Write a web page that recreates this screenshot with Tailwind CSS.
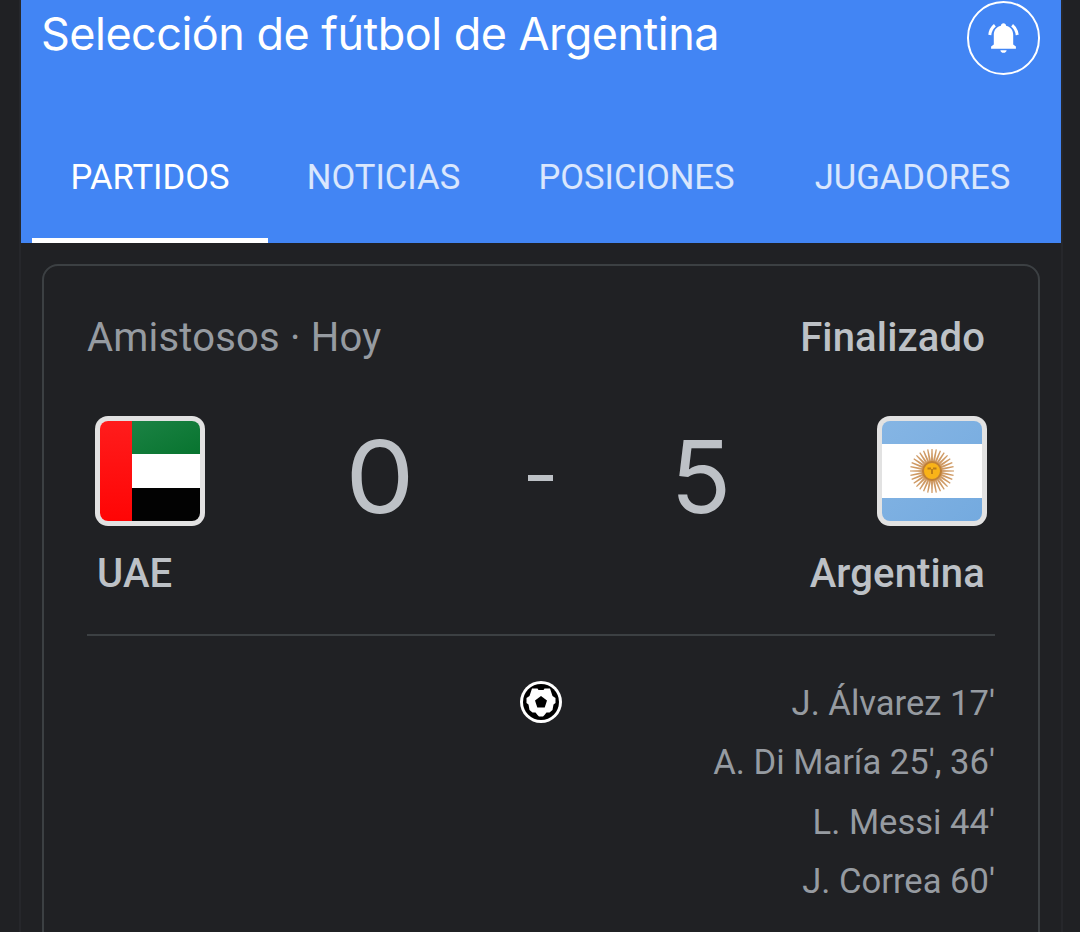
<!DOCTYPE html>
<html lang="es">
<head>
    <meta charset="UTF-8">
    <meta name="viewport" content="width=device-width, initial-scale=1.0">
    <title>Selección de fútbol de Argentina</title>
    <script src="https://cdn.jsdelivr.net/npm/@tailwindcss/browser@4"></script>
</head>
<body class="bg-[#202124] font-[Roboto,sans-serif] overflow-hidden">
    <div class="mx-[19px] w-[1044px] h-[932px] border-x-2 border-[#26272b] overflow-hidden">
        <!-- Header -->
        <header class="h-[243px] w-[1040px] bg-[#4285f4] flex flex-col">
            <div class="h-[110px] pl-[20px] pr-[21px] flex justify-between items-start">
                <h1 class="font-[Inter,sans-serif] text-[45px] leading-[68px] tracking-[-0.53px] text-white whitespace-nowrap">Selección de fútbol de Argentina</h1>
                <button class="mt-px w-[73px] h-[74px] rounded-full border-2 border-white flex items-center justify-center" aria-label="Notificaciones">
                    <svg class="w-[36px] h-[36px]" viewBox="0 0 36 36" fill="none">
                        <path d="M17.500 3.200c1.500 0 2.500 1 2.600 2.500 4.600 1 7.100 4.700 7.100 9.300v9.500l2.700 2v2.300H5.100v-2.300l2.700-2V15c0-4.600 2.500-8.300 7.100-9.300.1-1.500 1.100-2.500 2.600-2.500z" fill="#fff"/>
                        <path d="M14.400 30.200h6.200c0 1.500-1.300 2.600-3.100 2.600s-3.100-1.100-3.100-2.600z" fill="#fff"/>
                        <path d="M8.900 5.300C6 7.600 4.200 10.800 3.800 15M26.100 5.300c2.900 2.300 4.700 5.500 5.100 9.700" stroke="#fff" stroke-width="3"/>
                    </svg>
                </button>
            </div>
            <nav class="h-[133px] pl-[11px] flex text-[34.6px] leading-[134px] text-white/80 whitespace-nowrap">
                <a class="w-[236px] h-[133px] text-center text-white border-b-[5px] border-white">PARTIDOS</a>
                <a class="w-[231px] text-center">NOTICIAS</a>
                <a class="w-[275px] text-center">POSICIONES</a>
                <a class="w-[276px] pl-px text-center">JUGADORES</a>
            </nav>
        </header>

        <!-- Match card -->
        <main class="mt-[21px] mx-[21px] w-[998px] h-[720px] border-2 border-[#3c4043] rounded-[16px] px-[43px] text-[#bdc1c6]">
            <div class="mt-[46px] h-[52px] pr-[10px] flex justify-between text-[40px] leading-[52px]">
                <span class="text-[#969ba1] tracking-[0.2px]">Amistosos · Hoy</span>
                <span class="font-medium tracking-[0.15px]">Finalizado</span>
            </div>

            <div class="mt-[52px] mx-[8px] h-[110px] flex items-center">
                <div class="w-[110px] h-[110px] rounded-[13px] bg-[#e2e2e2] p-[5px]">
                    <svg class="w-[100px] h-[100px] rounded-[8px]" viewBox="0 0 100 100">
                        <defs>
                            <linearGradient id="red" x1="0" y1="0" x2="0" y2="1">
                                <stop offset="0" stop-color="#ff1c1c"/>
                                <stop offset="1" stop-color="#ff0505"/>
                            </linearGradient>
                            <linearGradient id="green" x1="0" y1="0" x2="1" y2="1">
                                <stop offset="0" stop-color="#1b8244"/>
                                <stop offset="1" stop-color="#08742f"/>
                            </linearGradient>
                        </defs>
                        <rect width="100" height="100" fill="#fff"/>
                        <rect x="32" width="68" height="33" fill="url(#green)"/>
                        <rect x="32" y="67" width="68" height="33" fill="#020202"/>
                        <rect width="32" height="100" fill="url(#red)"/>
                    </svg>
                </div>
                <div class="flex-1 flex items-center justify-center font-[Inter,sans-serif] text-[100px] leading-[110px]">
                    <span class="w-[180px] text-center pt-[12px] scale-x-[1.1]">0</span>
                    <span class="w-[140px] flex justify-center pt-[13px]"><i class="block w-[25px] h-[6px] bg-[#bdc1c6]"></i></span>
                    <span class="w-[182px] text-center pt-[12px]">5</span>
                </div>
                <div class="w-[110px] h-[110px] rounded-[13px] bg-[#e2e2e2] p-[5px]">
                    <svg class="w-[100px] h-[100px] rounded-[8px]" viewBox="0 0 100 100">
                        <defs>
                            <linearGradient id="sky" x1="0" y1="0" x2="1" y2="1">
                                <stop offset="0" stop-color="#85b5e4"/>
                                <stop offset="1" stop-color="#74aadf"/>
                            </linearGradient>
                        </defs>
                        <rect width="100" height="100" fill="url(#sky)"/>
                        <rect y="23" width="100" height="54" fill="#fff"/>
                        <g id="sun" fill="#cf9a64"></g>
                        <circle cx="50" cy="50" r="9" fill="#f9b318" stroke="#c08035" stroke-width="2"/>
                        <path d="M45.500 47.500h3.500M51 47.500h3.500M50 48v5" stroke="#b97a16" stroke-width="1.800"/>
                    </svg>
                </div>
            </div>

            <div class="mt-[22px] h-[52px] pl-[10px] pr-[10px] flex justify-between text-[40px] leading-[52px] font-medium tracking-[0.15px]">
                <span>UAE</span>
                <span>Argentina</span>
            </div>

            <div class="mt-[34px] w-[908px] h-[2px] bg-[#3c4043]"></div>

            <!-- Goals -->
            <div class="mt-[38px] w-[908px] grid grid-cols-[433px_42px_433px]">
                <div></div>
                <svg class="mt-[7px] w-[42px] h-[42px]" viewBox="0 0 42 42">
                    <circle cx="21" cy="21" r="21" fill="#fff"/>
                    <circle cx="21" cy="21" r="18" fill="#000"/>
                    <path d="M12 7.500h5.500l1 1.500h5l1-1.500H30l2.500 7.500 3 2v5l-2 1.500-1 5.500-3 2.500h-3L24.500 34 23 35.500h-4L17.500 34l-2-2.500h-3l-3-2.500-1-5.500-2-1.500v-5l3-2z" fill="#fff"/>
                    <path d="M21 15l6 4.400-2.300 7.100h-7.400L15 19.400z" fill="#000"/>
                </svg>
                <ul class="text-right text-[34.6px] leading-[59.400px] text-[#969ba1] whitespace-nowrap">
                    <li>J. Álvarez 17'</li>
                    <li>A. Di María 25', 36'</li>
                    <li>L. Messi 44'</li>
                    <li>J. Correa 60'</li>
                </ul>
            </div>
        </main>
    </div>

    <script>
        // Rays of the sun on the Argentine flag
        const sun = document.getElementById('sun');
        let rays = '';
        for (let i = 0; i < 32; i++) {
            rays += `<path d="M48.900 41L49.400 28L50.600 28L51.100 41z" transform="rotate(${i * 11.25} 50 50)"/>`;
        }
        sun.innerHTML = rays;
    </script>
</body>
</html>
